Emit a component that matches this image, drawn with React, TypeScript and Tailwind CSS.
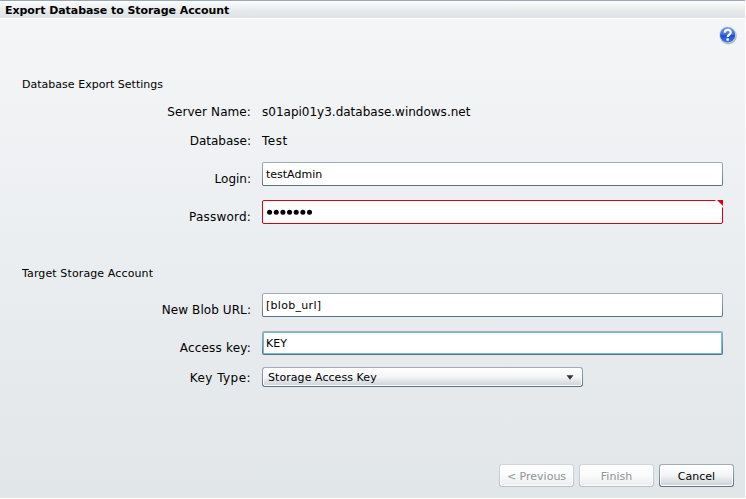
import type { ReactNode } from "react";

function Row({ label, className, labelClass = "", children }: { label: string; className: string; labelClass?: string; children: ReactNode }) {
  return (
    <div className={`flex w-full ${className}`}>
      <div className={`w-[251px] shrink-0 text-right text-[12px] leading-[16px] ${labelClass}`}>{label}</div>
      <div className="ml-[11px] flex">{children}</div>
    </div>
  );
}

function Field({ children, focused = false }: { children: ReactNode; focused?: boolean }) {
  return (
    <div className="h-6 w-[461px] rounded-[2px] bg-linear-to-b from-[#a3aebb] via-[#8493a3] to-[#5c7084] p-px">
      <div className={`h-full rounded-[1px] bg-white text-[11px] leading-[14px] ${focused ? "border border-[#6dbdd1] pt-1 pl-[2px]" : "pt-[5px] pl-[3px]"}`}>
        {children}
      </div>
    </div>
  );
}

function ActionButton({ children, disabled = false }: { children: ReactNode; disabled?: boolean }) {
  return (
    <button
      disabled={disabled}
      className={`h-[23px] w-[75px] rounded-[3px] p-px text-[11px] ${disabled ? "bg-linear-to-b from-[#d2d7dc] to-[#b8c1c9] text-[#919394]" : "bg-linear-to-b from-[#a3aebb] to-[#5c7084] text-black"}`}
    >
      <span
        className={`flex h-full justify-center rounded-[2px] border border-white bg-linear-to-b from-white pt-1 leading-[14px] ${disabled ? "via-[#fafbfb] to-[#eceeef]" : "via-[#f2f4f5] to-[#cfd4d9]"}`}
      >
        {children}
      </span>
    </button>
  );
}

function HelpIcon() {
  return (
    <svg width="20" height="20" viewBox="0 0 20 20">
      <defs>
        <linearGradient id="ball" x1="0" y1="0" x2="0" y2="1">
          <stop offset="0" stopColor="#6c93ef" />
          <stop offset=".48" stopColor="#3f6ee2" />
          <stop offset=".52" stopColor="#1d4dcc" />
          <stop offset="1" stopColor="#3d78ee" />
        </linearGradient>
      </defs>
      <circle cx="10.3" cy="10.9" r="8.5" fill="#8c8f94" opacity=".6" />
      <circle cx="9.6" cy="9.9" r="8.4" fill="#c9d3e6" />
      <circle cx="9.6" cy="9.9" r="7.6" fill="url(#ball)" />
      <path d="M6.8 7.7C6.8 3.8 12.7 3.9 12.7 7.4C12.7 9.7 9.7 9.5 9.7 12.1" fill="none" stroke="white" strokeWidth="2.3" />
      <rect x="8.4" y="13.3" width="2.5" height="2.4" rx=".4" fill="white" />
    </svg>
  );
}

export default function App() {
  return (
    <div className="h-[499px] w-[746px] overflow-hidden bg-white font-['DejaVu_Sans',sans-serif] text-black">
      <div className="flex h-[498px] w-[745px] flex-col bg-linear-to-b from-[#f5f6f8] to-[#e1e6e9]">
        <header className="h-[19px] shrink-0 border-t border-b border-t-[#9aa7b5] border-b-white bg-linear-to-b from-[#fcfcfc] via-[#e6e9eb] via-60% to-[#dfe3e6] pt-px pl-[5px] text-[11px] leading-[17px] font-bold tracking-[-0.06px]">
          Export Database to Storage Account
        </header>
        <div className="flex h-[59px] shrink-0 justify-end pt-[6px] pr-[7px]">
          <HelpIcon />
        </div>
        <h2 className="h-[14px] pl-[22px] text-[11px] leading-[14px] tracking-[0.02px]">Database Export Settings</h2>
        <Row label="Server Name:" className="mt-3 h-4" labelClass="tracking-[0.1px]">
          <span className="text-[12px] leading-[16px]">s01api01y3.database.windows.net</span>
        </Row>
        <Row label="Database:" className="mt-[13px] h-4">
          <span className="text-[12px] leading-[16px] tracking-[0.5px]">Test</span>
        </Row>
        <Row label="Login:" className="mt-[13px] h-6" labelClass="pt-[9px]">
          <Field>testAdmin</Field>
        </Row>
        <Row label="Password:" className="mt-[14px] h-6" labelClass="pt-[9px] tracking-[0.2px]">
          <div className="relative flex h-6 w-[461px] items-center rounded-[2px] border border-[#db000c] bg-white pl-1">
            <svg width="47" height="6" viewBox="0 0 47 6">
              {Array.from({ length: 7 }, (_, i) => (
                <circle key={i} cx={2.6 + i * 6.65} cy="3.2" r="2.5" fill="black" />
              ))}
            </svg>
            <svg className="absolute -top-px -right-px" width="8" height="8" viewBox="0 0 8 8">
              <path d="M0 0H8V8Z" fill="white" />
              <path d="M2 0H8V6Z" fill="#db000c" />
            </svg>
          </div>
        </Row>
        <h2 className="mt-[43px] h-[14px] pl-[22px] text-[11px] leading-[14px] tracking-[0.12px]">Target Storage Account</h2>
        <Row label="New Blob URL:" className="mt-3 h-6" labelClass="pt-[9px] tracking-[0.08px]">
          <Field>
            <span className="block tracking-[0.3px]">[blob_url]</span>
          </Field>
        </Row>
        <Row label="Access key:" className="mt-[14px] h-6" labelClass="pt-[9px] tracking-[0.2px]">
          <Field focused>KEY</Field>
        </Row>
        <Row label="Key Type:" className="mt-3 h-5" labelClass="pt-[3px] tracking-[0.45px]">
          <div className="h-5 w-[321px] rounded-[3px] bg-linear-to-b from-[#a3aebb] to-[#5c7084] p-px">
            <div className="flex h-full items-center justify-between rounded-[2px] border border-white bg-linear-to-b from-white via-[#f4f5f6] to-[#d0d5da] pr-[7px] pl-1 text-[11px]">
              <span className="pt-px leading-[15px] tracking-[0.06px]">Storage Access Key</span>
              <svg width="8" height="5" viewBox="0 0 8 5">
                <path d="M.5 .3H7.5L4 4.7Z" fill="#333" />
              </svg>
            </div>
          </div>
        </Row>
        <footer className="mt-[77px] flex justify-end gap-[5px] pr-[11px]">
          <ActionButton disabled>&lt; Previous</ActionButton>
          <ActionButton disabled>Finish</ActionButton>
          <ActionButton>Cancel</ActionButton>
        </footer>
      </div>
    </div>
  );
}
